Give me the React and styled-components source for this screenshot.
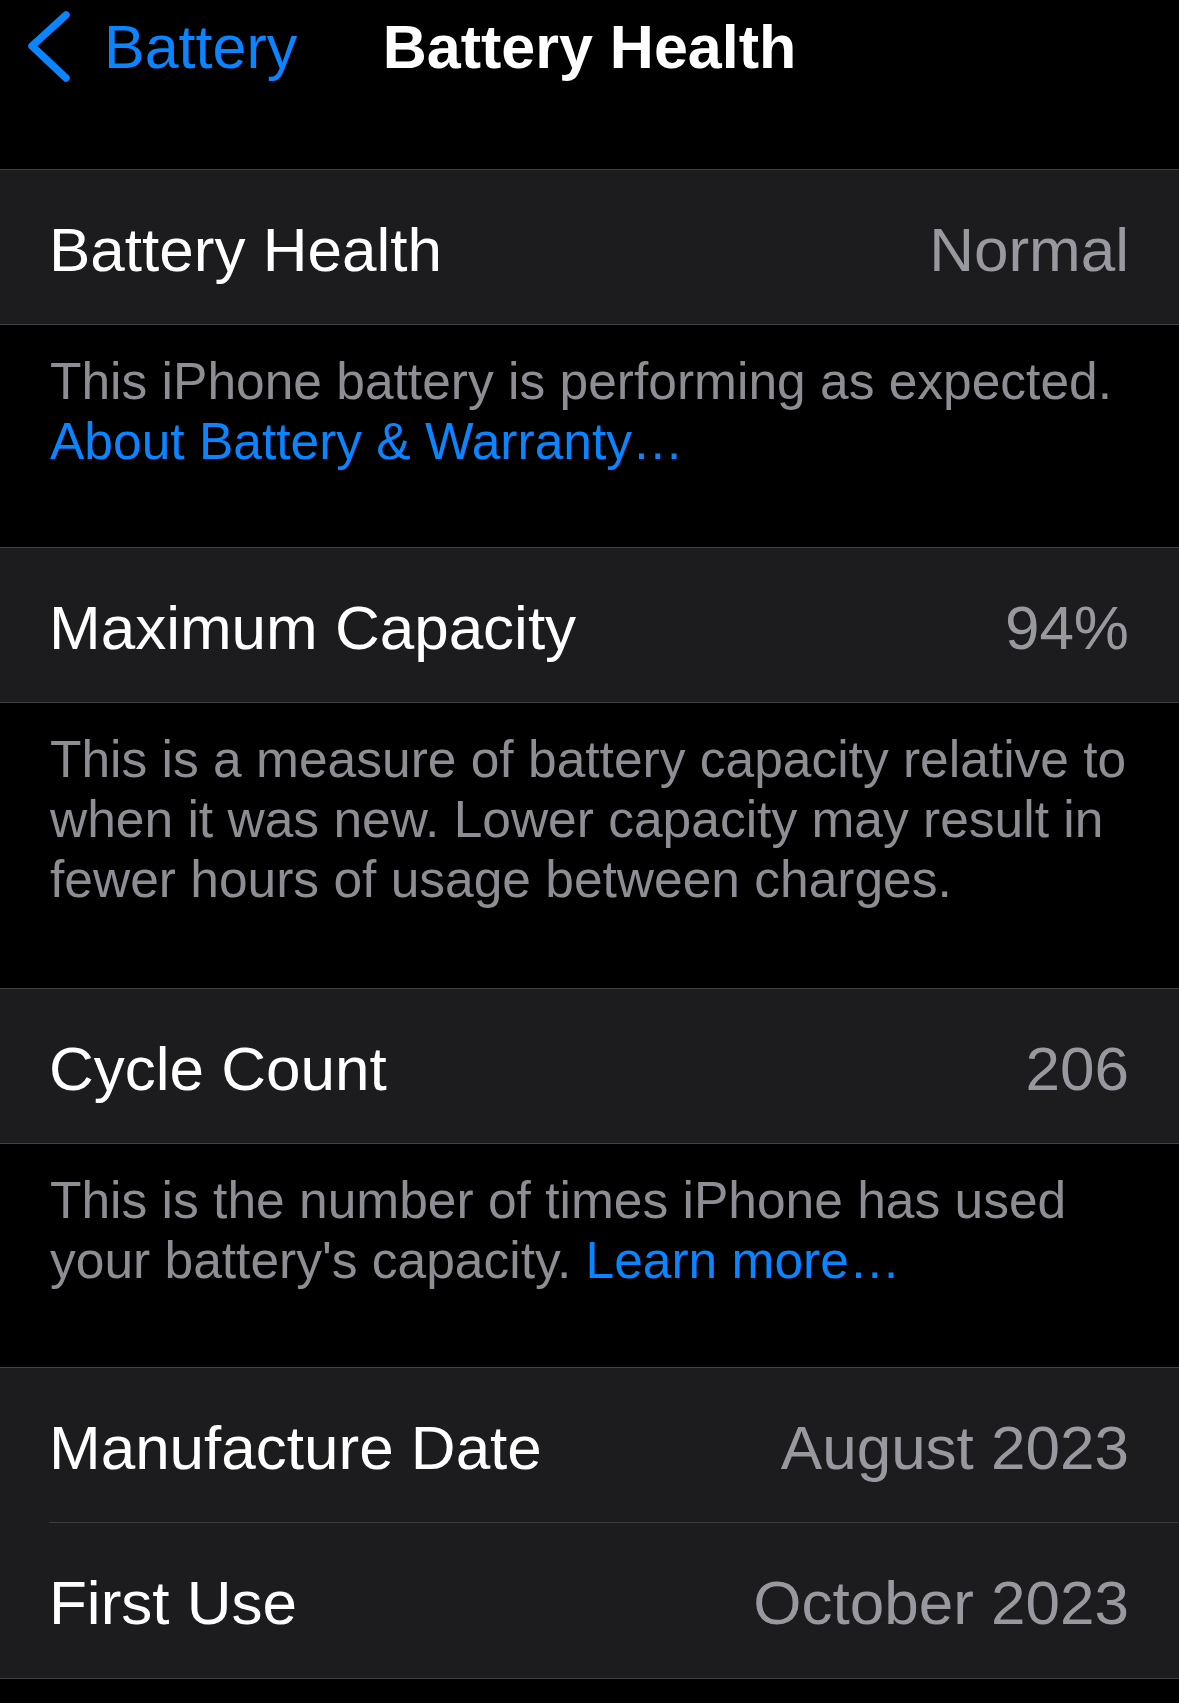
import React from "react";
import styled, { createGlobalStyle } from "styled-components";

const GlobalStyle = createGlobalStyle`
  html, body {
    margin: 0;
    padding: 0;
    background: #000;
  }
  body {
    font-family: "Liberation Sans", Arial, sans-serif;
    -webkit-font-smoothing: antialiased;
  }
`;

const Page = styled.div`
  width: 1179px;
  min-height: 1703px;
  background: #000;
  color: #fff;
`;

const NavBar = styled.div`
  display: grid;
  grid-template-columns: 1fr auto 1fr;
  align-items: flex-start;
  height: 169px;
  padding-top: 12px;
  box-sizing: border-box;
`;

const BackButton = styled.div`
  display: flex;
  align-items: flex-start;
  gap: 33px;
  padding-left: 27px;
  color: #0a84ff;
  font-size: 61px;
  line-height: 70px;

  svg {
    margin-top: -2px;
    flex-shrink: 0;
  }
`;

const Title = styled.div`
  font-size: 61px;
  line-height: 70px;
  font-weight: 700;
  color: #fff;
`;

const Group = styled.div`
  background: #1c1c1e;
  border-top: 1px solid #424246;
  border-bottom: 1px solid #424246;
`;

const Row = styled.div`
  padding-left: 49px;
`;

const RowInner = styled.div`
  display: flex;
  align-items: center;
  justify-content: space-between;
  height: ${({ h }) => h || 154}px;
  padding: 4px 50px 0 0;
  box-sizing: border-box;
  border-bottom: ${({ divider }) => (divider ? "1px solid #3c3c40" : "none")};
  font-size: 62px;
`;

const Label = styled.span`
  color: #fff;
`;

const Value = styled.span`
  color: #98989f;
`;

const Footer = styled.div`
  padding: 26px 50px 0 50px;
  height: ${({ h }) => h}px;
  box-sizing: border-box;
  font-size: 51.5px;
  line-height: 60px;
  color: #8d8d93;
  white-space: nowrap;
`;

const Link = styled.span`
  color: #0a84ff;
`;

const Chevron = () => (
  <svg width="44" height="72" viewBox="0 0 44 72" fill="none">
    <polyline
      points="39,5 5,36 39,68"
      stroke="#0a84ff"
      strokeWidth="7.5"
      strokeLinecap="round"
      strokeLinejoin="round"
    />
  </svg>
);

const Cell = ({ label, value, divider, h }) => (
  <Row>
    <RowInner divider={divider} h={h}>
      <Label>{label}</Label>
      <Value>{value}</Value>
    </RowInner>
  </Row>
);

export default function App() {
  return (
    <Page>
      <GlobalStyle />
      <NavBar>
        <BackButton>
          <Chevron />
          <span>Battery</span>
        </BackButton>
        <Title>Battery Health</Title>
        <div />
      </NavBar>

      <Group>
        <Cell label="Battery Health" value="Normal" />
      </Group>
      <Footer h={222}>
        This iPhone battery is performing as expected.
        <br />
        <Link>About Battery &amp; Warranty…</Link>
      </Footer>

      <Group>
        <Cell label="Maximum Capacity" value="94%" />
      </Group>
      <Footer h={285}>
        This is a measure of battery capacity relative to
        <br />
        when it was new. Lower capacity may result in
        <br />
        fewer hours of usage between charges.
      </Footer>

      <Group>
        <Cell label="Cycle Count" value="206" />
      </Group>
      <Footer h={223}>
        This is the number of times iPhone has used
        <br />
        your battery's capacity. <Link>Learn more…</Link>
      </Footer>

      <Group>
        <Cell label="Manufacture Date" value="August 2023" divider h={155} />
        <Cell label="First Use" value="October 2023" h={155} />
      </Group>
    </Page>
  );
}
